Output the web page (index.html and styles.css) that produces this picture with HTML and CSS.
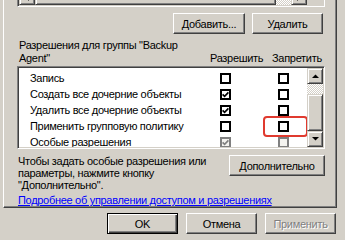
FILE: index.html
```html
<!DOCTYPE html>
<html lang="ru">
<head>
<meta charset="UTF-8">
<title>Безопасность</title>
<link rel="stylesheet" href="styles.css">
</head>
<body>
    <div class="tab">
        <!-- bottom edge of the group / user list -->
        <div class="names">
            <div class="hscroll">
                <span class="sb-btn"><svg width="4" height="7" viewBox="0 0 4 7"><polygon points="4,0 4,7 0.5,3.5"/></svg></span>
                <span class="sb-thumb"></span>
                <span class="sb-track"></span>
                <span class="sb-btn"><svg width="4" height="7" viewBox="0 0 4 7"><polygon points="0,0 0,7 3.5,3.5"/></svg></span>
            </div>
            <span class="corner"></span>
        </div>

        <div class="actions">
            <button class="btn add">Добавить...</button>
            <button class="btn remove">Удалить</button>
        </div>

        <div class="perm-head">
            <div class="perm-title">Разрешения для группы "Backup Agent"</div>
            <div class="col-allow">Разрешить</div>
            <div class="col-deny">Запретить</div>
        </div>

        <div class="perms">
            <div class="rows">
                <div class="list">
                    <div class="row"><span class="name">Запись</span><span class="cb"></span><span class="cb"></span></div>
                    <div class="row">
                        <span class="name">Создать все дочерние объекты</span>
                        <span class="cb"><svg width="7" height="7" viewBox="0 0 7 7"><path d="M0.6 3.4 L2.6 5.4 L6.4 1.4"/></svg></span>
                        <span class="cb"></span>
                    </div>
                    <div class="row">
                        <span class="name">Удалить все дочерние объекты</span>
                        <span class="cb"><svg width="7" height="7" viewBox="0 0 7 7"><path d="M0.6 3.4 L2.6 5.4 L6.4 1.4"/></svg></span>
                        <span class="cb"></span>
                    </div>
                    <div class="row">
                        <span class="name">Применить групповую политику</span>
                        <span class="cb"></span>
                        <span class="cb"><span class="hl"></span></span>
                    </div>
                    <div class="row off">
                        <span class="name">Особые разрешения</span>
                        <span class="cb"><svg width="7" height="7" viewBox="0 0 7 7"><path d="M0.6 3.4 L2.6 5.4 L6.4 1.4"/></svg></span>
                        <span class="cb"></span>
                    </div>
                </div>
            </div>
            <div class="vscroll">
                <span class="sb-btn"><svg width="7" height="4" viewBox="0 0 7 4"><polygon points="0,4 7,4 3.5,0.5"/></svg></span>
                <span class="sb-track"></span>
                <span class="sb-thumb"></span>
                <span class="sb-btn"><svg width="7" height="4" viewBox="0 0 7 4"><polygon points="0,0 7,0 3.5,3.5"/></svg></span>
            </div>
        </div>

        <div class="special">
            <p>Чтобы задать особые разрешения или параметры, нажмите кнопку "Дополнительно".</p>
            <button class="btn advanced">Дополнительно</button>
        </div>

        <a class="more" href="#">Подробнее об управлении доступом и разрешениях</a>
    </div>

    <div class="dialog-buttons">
        <button class="btn default">OK</button>
        <button class="btn">Отмена</button>
        <button class="btn" disabled>Применить</button>
    </div>
</body>
</html>
```

FILE: styles.css
```css
* {
    box-sizing: border-box;
}

body {
    margin: 0;
    width: 345px;
    height: 240px;
    overflow: hidden;
    background: #d4d0c8;
    font: 11px "Liberation Sans", Arial, sans-serif;
    letter-spacing: -0.3px;
    color: #000;
}

/* tab page */
.tab {
    margin-left: 3px;
    width: 334px;
    padding: 0 11px 0 13px;
    border-left: 1px solid #fff;
    border-right: 1px solid #404040;
    border-bottom: 1px solid #404040;
    box-shadow: inset -1px -1px #808080;
}

/* classic 3d bits */
.sb-btn,
.sb-thumb {
    display: flex;
    align-items: center;
    justify-content: center;
    width: 16px;
    height: 16px;
    background: #d4d0c8;
    border: 1px solid;
    border-color: #d4d0c8 #404040 #404040 #d4d0c8;
    box-shadow: inset 1px 1px #fff, inset -1px -1px #808080;
}

.sb-track {
    background: repeating-conic-gradient(#fff 0 25%, #d4d0c8 0 50%) 0 0 / 2px 2px;
}

.names {
    display: flex;
    align-items: flex-end;
    height: 7px;
    overflow: hidden;
    padding: 0 1px 1px 1px;
    border: 1px solid;
    border-color: #808080 #fff #fff #808080;
    border-top: none;
    box-shadow: inset 1px 0 #404040, inset -1px -1px #d4d0c8;
}

.hscroll {
    display: flex;
    flex: 1;
}

.hscroll .sb-thumb {
    flex: 1;
}

.hscroll .sb-track {
    width: 15px;
    height: 16px;
}

.corner {
    width: 16px;
    height: 16px;
}

/* buttons */
.btn {
    height: 21px;
    padding: 0;
    font: inherit;
    letter-spacing: inherit;
    color: #000;
    background: #d4d0c8;
    border: 1px solid;
    border-color: #fff #404040 #404040 #fff;
    box-shadow: inset -1px -1px #808080;
}

.btn.default {
    border-color: #000;
    box-shadow: inset 1px 1px #fff, inset -1px -1px #404040, inset -2px -2px #808080;
}

.btn:disabled {
    color: #808080;
    text-shadow: 1px 1px #fff;
}

.actions {
    display: flex;
    justify-content: flex-end;
    gap: 7px;
    margin-top: 6px;
    padding-right: 2px;
}

.add {
    width: 72px;
}

.remove {
    width: 71px;
}

/* permissions */
.perm-head {
    display: flex;
    align-items: flex-end;
    margin-top: 5px;
    line-height: 13px;
}

.perm-title {
    width: 186px;
    padding-left: 2px;
}

.col-allow {
    width: 62px;
    margin-left: 7px;
}

.perms {
    display: flex;
    height: 83px;
    margin-top: 1px;
    padding: 1px;
    background: #fff;
    border: 1px solid;
    border-color: #808080 #fff #fff #808080;
    box-shadow: inset 1px 1px #404040, inset -1px -1px #d4d0c8;
}

.rows {
    flex: 1;
    overflow: hidden;
}

.list {
    margin-top: 2px;
}

.row {
    display: flex;
    align-items: center;
    height: 16px;
    padding: 0 18px 0 11px;
    white-space: nowrap;
}

.row .name {
    flex: 1;
}

.cb {
    position: relative;
    display: flex;
    align-items: center;
    justify-content: center;
    width: 11px;
    height: 11px;
    background: #fff;
    border: 2px solid #000;
}

.cb + .cb {
    margin-left: 47px;
}

.cb svg path {
    fill: none;
    stroke: #000;
    stroke-width: 1.6;
}

.row.off .cb {
    border-color: #808080;
    background: #f4f3ef;
}

.row.off .cb svg path {
    stroke: #808080;
}

/* red marker round the checkbox */
.hl {
    position: absolute;
    left: -17px;
    top: -7px;
    width: 45px;
    height: 21px;
    border: 2px solid #e03a2f;
    border-radius: 4px;
}

.vscroll {
    display: flex;
    flex-direction: column;
    width: 16px;
}

.vscroll .sb-track {
    height: 10px;
}

.vscroll .sb-thumb {
    flex: 1;
}

.special {
    display: flex;
    justify-content: space-between;
    align-items: flex-start;
    margin-top: 6px;
}

.special p {
    width: 206px;
    margin: 0;
    padding-left: 1px;
    line-height: 12px;
}

.advanced {
    width: 96px;
}

.more {
    display: block;
    margin-top: 3px;
    padding-left: 1px;
    line-height: 13px;
    color: #0000ff;
}

.dialog-buttons {
    display: flex;
    justify-content: flex-end;
    gap: 8px;
    margin-top: 5px;
    padding-right: 9px;
}

.dialog-buttons .btn {
    width: 71px;
}
```
